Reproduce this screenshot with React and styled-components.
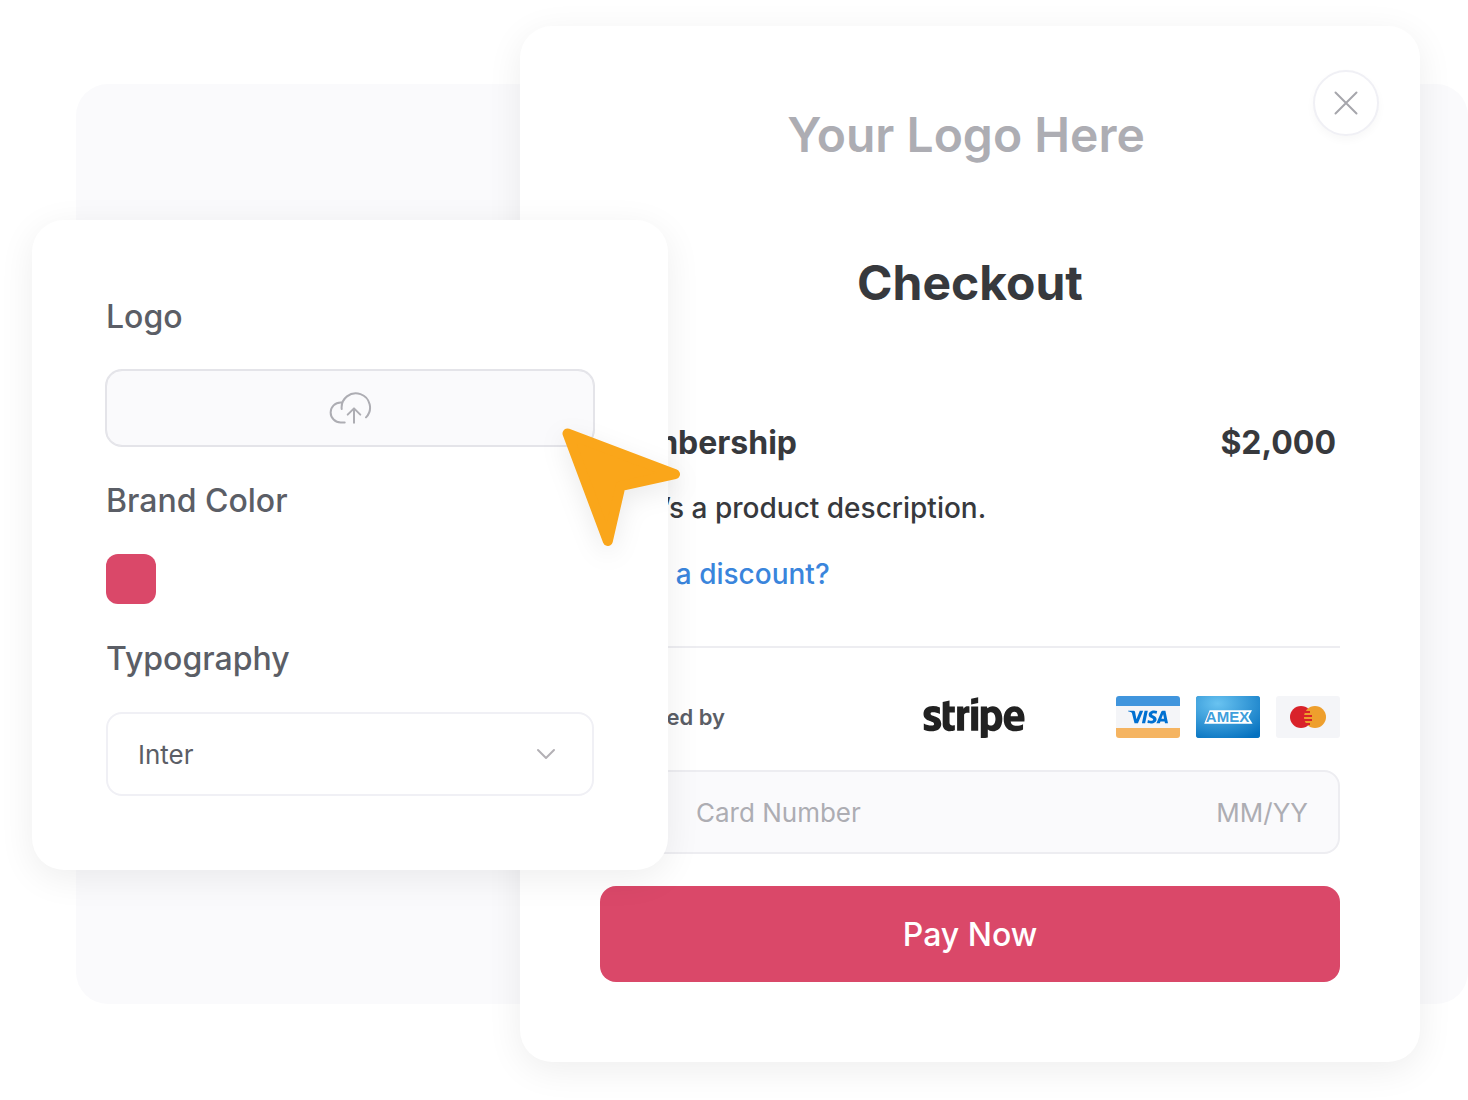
import React from 'react';
import styled, {createGlobalStyle} from 'styled-components';
import {CreditCard} from 'lucide-react';
import {FaStripe} from 'react-icons/fa';
import {SiVisa} from 'react-icons/si';

const brand = '#da4869';

const GlobalStyle = createGlobalStyle`
  * {
    box-sizing: border-box;
  }

  body {
    margin: 0;
    background: #fff;
    font-family: Inter, sans-serif;
    -webkit-font-smoothing: antialiased;
  }

  button, input, select {
    font-family: inherit;
  }
`;

/* the backdrop and both panels share one row and overlap by column */
const Stage = styled.main`
  display: grid;
  grid-template-columns: 32px 44px minmax(0, 444fr) 148px minmax(0, 752fr) 48px;
`;

const Backdrop = styled.div`
  grid-area: 1 / 3 / 2 / -1;
  margin: 84px 0 96px;
  border-radius: 32px;
  background: #fafafc;
`;

const Panel = styled.section`
  position: relative;
  display: flex;
  flex-direction: column;
  align-self: start;
  border-radius: 32px;
  background: #fff;
  box-shadow: 0 8px 36px rgba(0, 0, 0, 0.07);
`;

const CheckoutPanel = styled(Panel)`
  grid-area: 1 / 4 / 2 / 6;
  margin: 26px 0 38px;
  padding: 80px;
`;

const SettingsPanel = styled(Panel)`
  grid-area: 1 / 2 / 2 / 5;
  margin-top: 220px;
  padding: 78px 74px 74px;
`;

const LogoText = styled.div`
  padding-right: 8px;
  color: #adadb3;
  font-size: 48px;
  font-weight: 600;
  line-height: 58px;
  text-align: center;
`;

const Title = styled.h1`
  margin: 90px 0 112px;
  color: #37393d;
  font-size: 48px;
  font-weight: 700;
  line-height: 58px;
  text-align: center;
`;

const ProductRow = styled.div`
  display: flex;
  justify-content: space-between;
  padding-right: 4px;
  color: #37393d;
  font-size: 32px;
  font-weight: 700;
  line-height: 38px;
`;

const Description = styled.p`
  margin: 29px 0 32px;
  color: #37393d;
  font-size: 28px;
  font-weight: 500;
  line-height: 34px;
`;

const DiscountLink = styled.a`
  align-self: flex-start;
  color: #3a85dc;
  font-size: 28px;
  font-weight: 500;
  line-height: 34px;
  text-decoration: none;
`;

const Divider = styled.hr`
  width: 100%;
  height: 2px;
  margin: 55px 0 48px;
  border: 0;
  background: #ededf1;
`;

const PaymentRow = styled.div`
  display: flex;
  align-items: center;
  gap: 91px;
`;

const PoweredBy = styled.span`
  margin-right: auto;
  color: #5b5e66;
  font-size: 22px;
  font-weight: 600;
  line-height: 34px;
`;

const StripeLogo = styled(FaStripe)`
  width: 102px;
  height: 42px;
  color: #212121;
`;

const Cards = styled.div`
  display: flex;
  gap: 16px;
`;

const CardBadge = styled.span`
  display: flex;
  align-items: center;
  justify-content: center;
  width: 64px;
  height: 42px;
  overflow: hidden;
  border-radius: 3px;
  background: ${(props) => props.$fill};
`;

const VisaMark = styled(SiVisa)`
  width: 40px;
  height: 40px;
  color: #0070d1;
`;

const CardField = styled.div`
  display: flex;
  align-items: center;
  gap: 32px;
  height: 84px;
  margin: 32px 0;
  padding: 0 30px;
  border: 2px solid #ededf1;
  border-radius: 16px;
  background: #fafafc;
  color: #adadb3;
`;

const CardInput = styled.input`
  flex: ${(props) => (props.$short ? '0 0 100px' : '1 1 0')};
  min-width: 0;
  height: 34px;
  padding: 0;
  border: 0;
  outline: 0;
  background: transparent;
  color: #37393d;
  font-size: 26px;
  text-align: ${(props) => (props.$short ? 'right' : 'left')};

  &::placeholder {
    color: #adadb3;
    opacity: 1;
  }
`;

const PayButton = styled.button`
  height: 96px;
  border: 0;
  border-radius: 16px;
  background: ${brand};
  color: #fff;
  font-size: 32px;
  font-weight: 500;
  cursor: pointer;
`;

const CloseButton = styled.button`
  position: absolute;
  top: 44px;
  right: 41px;
  display: flex;
  align-items: center;
  justify-content: center;
  width: 66px;
  height: 66px;
  padding: 0;
  border: 2px solid #f0f0f5;
  border-radius: 50%;
  background: #fff;
  box-shadow: 0 4px 8px rgba(0, 0, 0, 0.03);
  cursor: pointer;
`;

const Field = styled.div`
  display: flex;
  flex-direction: column;
  gap: 34px;

  & + & {
    margin-top: 36px;
  }
`;

const Label = styled.label`
  color: #5b5e66;
  font-size: 32px;
  font-weight: 500;
  line-height: 38px;
`;

const UploadButton = styled.button`
  display: flex;
  align-items: center;
  justify-content: center;
  height: 76px;
  border: 1px solid #e4e4e9;
  border-radius: 16px;
  background: #fafafc;
  box-shadow: 0 0 0 1px #e4e4e9;
  cursor: pointer;
`;

const Swatch = styled.input`
  width: 50px;
  height: 50px;
  padding: 0;
  border: 0;
  border-radius: 12px;
  background: ${brand};
  appearance: none;
  overflow: hidden;
  cursor: pointer;

  &::-webkit-color-swatch-wrapper {
    padding: 0;
  }

  &::-webkit-color-swatch {
    border: 0;
  }
`;

const SelectBox = styled.div`
  position: relative;
`;

const Select = styled.select`
  display: block;
  width: 100%;
  height: 84px;
  padding: 0 30px;
  border: 2px solid #f0f0f5;
  border-radius: 16px;
  background: #fff;
  color: #5b5e66;
  font-size: 26px;
  appearance: none;
`;

const Chevron = styled.svg`
  position: absolute;
  top: 36px;
  right: 38px;
  pointer-events: none;
`;

const Pointer = styled.svg`
  position: absolute;
  top: 208px;
  right: -12px;
  overflow: visible;
  filter: drop-shadow(0 8px 12px rgba(0, 0, 0, 0.08));
  pointer-events: none;
`;

const AmexMark = () => (
    <svg width="64" height="42" viewBox="0 0 64 42" role="img" aria-label="Amex">
        <defs>
            <radialGradient id="amex" cx="0.34" cy="0.18" r="0.95">
                <stop offset="0" stopColor="#69c3f1" />
                <stop offset="1" stopColor="#0571bf" />
            </radialGradient>
        </defs>
        <rect width="64" height="42" fill="url(#amex)" />
        <path d="M8.2 27.8 13.6 14.2H56L52.4 21 56.6 27.8Z" fill="#fff" />
        <text
            x="31.5"
            y="26"
            textAnchor="middle"
            fontFamily="Liberation Sans, sans-serif"
            fontSize="15"
            fontWeight="700"
            fill="#3f9fdc"
        >
            AMEX
        </text>
    </svg>
);

const MastercardMark = () => (
    <svg width="36" height="22" viewBox="0 0 36 22" role="img" aria-label="Mastercard">
        <circle cx="11" cy="11" r="11" fill="#d9222a" />
        <circle cx="25" cy="11" r="11" fill="#ee9f2d" />
        <path d="M15 6h5M14 10h8M14 14h8M15 18h5" stroke="#d9222a" strokeWidth="2" />
    </svg>
);

const CloudUpload = () => (
    <svg
        width="44"
        height="36"
        viewBox="0 0 44 36"
        fill="none"
        stroke="#adadb3"
        strokeWidth="2"
        strokeLinecap="round"
        strokeLinejoin="round"
    >
        <path d="M16.7 32.5H12.7A10 10 0 0 1 12.7 12.4H14.2" />
        <path d="M13.7 19A14.2 14.2 0 1 1 38 27.4" />
        <path d="M26 32.7V18.4M19.7 24.6 26 18.4 32.3 24.6" />
    </svg>
);

function Checkout() {
    return (
        <CheckoutPanel>
            <CloseButton type="button" aria-label="Close">
                <svg width="24" height="24" viewBox="0 0 24 24" stroke="#a6a6ac" strokeWidth="2" strokeLinecap="round">
                    <path d="M1.5 1.5 22.5 22.5M22.5 1.5 1.5 22.5" />
                </svg>
            </CloseButton>
            <LogoText>Your Logo Here</LogoText>
            <Title>Checkout</Title>
            <ProductRow>
                <span>Membership</span>
                <span>$2,000</span>
            </ProductRow>
            <Description>Here’s a product description.</Description>
            <DiscountLink href="#discount">Have a discount?</DiscountLink>
            <Divider />
            <PaymentRow>
                <PoweredBy>Powered by</PoweredBy>
                <StripeLogo viewBox="0 116 640 266" />
                <Cards>
                    <CardBadge $fill="linear-gradient(#4095dd 10px, #f4f5f8 10px 32px, #f5b461 32px)">
                        <VisaMark />
                    </CardBadge>
                    <CardBadge $fill="#2b8fd3">
                        <AmexMark />
                    </CardBadge>
                    <CardBadge $fill="#f4f5f8">
                        <MastercardMark />
                    </CardBadge>
                </Cards>
            </PaymentRow>
            <CardField>
                <CreditCard size={32} strokeWidth={1} />
                <CardInput aria-label="Card Number" placeholder="Card Number" />
                <CardInput $short aria-label="Expiry date" placeholder="MM/YY" />
            </CardField>
            <PayButton type="button">Pay Now</PayButton>
        </CheckoutPanel>
    );
}

function Settings() {
    return (
        <SettingsPanel>
            <Field>
                <Label htmlFor="logo">Logo</Label>
                <UploadButton id="logo" type="button">
                    <CloudUpload />
                </UploadButton>
            </Field>
            <Field>
                <Label htmlFor="color">Brand Color</Label>
                <Swatch id="color" type="color" defaultValue={brand} />
            </Field>
            <Field>
                <Label htmlFor="font">Typography</Label>
                <SelectBox>
                    <Select id="font" defaultValue="Inter">
                        <option>Inter</option>
                    </Select>
                    <Chevron width="20" height="12" viewBox="0 0 20 12" fill="none" stroke="#b3b0b5" strokeWidth="2" strokeLinecap="round" strokeLinejoin="round">
                        <path d="M2 2 10 10 18 2" />
                    </Chevron>
                </SelectBox>
            </Field>
            <Pointer width="118" height="118" viewBox="562 428 118 118">
                <path
                    d="M567.5 433.5 675 474.2 620.5 486.1 607.8 541Z"
                    fill="#faa61a"
                    stroke="#faa61a"
                    strokeWidth="10"
                    strokeLinejoin="round"
                />
            </Pointer>
        </SettingsPanel>
    );
}

export default function App() {
    return (
        <>
            <GlobalStyle />
            <Stage>
                <Backdrop />
                <Checkout />
                <Settings />
            </Stage>
        </>
    );
}
